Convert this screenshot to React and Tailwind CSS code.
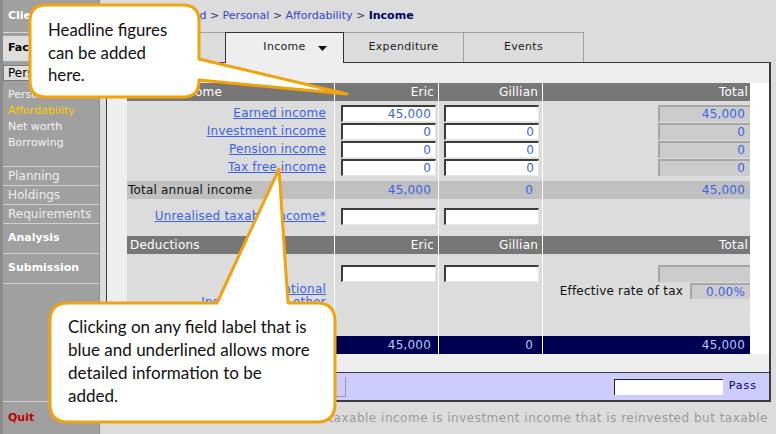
import React from "react";

const GRID = "grid grid-cols-[207px_103px_103px_207px] gap-x-px bg-white";
const CELL = "flex items-center bg-[#dcdcdc]";

function Row({ className = "", children }) {
  return <div className={`${GRID} ${className}`}>{children}</div>;
}

function Spacer({ className }) {
  return (
    <Row className={className}>
      <div className="bg-[#dcdcdc]" />
      <div className="bg-[#dcdcdc]" />
      <div className="bg-[#dcdcdc]" />
      <div className="bg-[#dcdcdc]" />
    </Row>
  );
}

function Field({ value = "", className = "" }) {
  return (
    <input
      readOnly
      value={value}
      className={`h-[17px] w-[95px] border-t-2 border-l-2 border-b border-r border-t-[#3c3c3c] border-l-[#3c3c3c] border-b-[#e6e6e6] border-r-[#e6e6e6] bg-white pr-[4px] text-right text-[#3a62e8] outline-none ${className}`}
    />
  );
}

function Sum({ value = "" }) {
  return (
    <div className="ml-auto flex h-[17px] w-[92px] items-center justify-end border-t-2 border-l-2 border-[#a6a6a6] bg-[#cccccc] pr-[5px] text-[#3a62e8]">
      {value}
    </div>
  );
}

function Link({ children }) {
  return <a className="cursor-pointer text-[#3a62e8] underline">{children}</a>;
}

const incomeRows = [
  { label: "Earned income", eric: "45,000", gillian: "", total: "45,000" },
  { label: "Investment income", eric: "0", gillian: "0", total: "0" },
  { label: "Pension income", eric: "0", gillian: "0", total: "0" },
  { label: "Tax free income", eric: "0", gillian: "0", total: "0" },
];

function Sidebar() {
  return (
    <nav className="flex h-full w-[100px] shrink-0 flex-col border-l-[3px] border-r border-l-[#8c8c8c] border-r-[#8c8c8c] bg-[#a0a0a0] text-[11px] text-white">
      <div className="flex h-[33px] items-center border-b border-[#d8d8d8] pl-[5px] font-bold">Client</div>
      <div className="h-[3px]" />
      <div className="flex h-[25px] items-center bg-[#dedede] pl-[5px] font-bold text-black">Factfind</div>
      <div className="h-[4px]" />
      <div className="flex h-[16px] items-center border border-[#7a7a7a] bg-[#dedede] pl-[4px] text-[12px] text-black">
        Personal
      </div>
      <div className="flex h-[85px] flex-col pt-[6px] pl-[5px] leading-[16px] text-[#f4f4f4]">
        <span>Personal details</span>
        <span className="text-[#ffcc00]">Affordability</span>
        <span>Net worth</span>
        <span>Borrowing</span>
      </div>
      <div className="flex h-[19px] items-center border-t border-[#d0d0d0] pl-[5px] text-[12px] text-[#eeeeee]">Planning</div>
      <div className="flex h-[19px] items-center border-t border-[#d0d0d0] pl-[5px] text-[12px] text-[#eeeeee]">Holdings</div>
      <div className="flex h-[19px] items-center border-t border-[#d0d0d0] pl-[5px] text-[12px] text-[#eeeeee]">Requirements</div>
      <div className="flex h-[30px] items-center border-t border-[#d0d0d0] pl-[5px] font-bold">Analysis</div>
      <div className="flex h-[30px] items-center border-t border-[#d0d0d0] pl-[5px] font-bold">Submission</div>
      <div className="flex-1 border-y border-[#d0d0d0]" />
      <div className="flex h-[32px] items-center justify-between pl-[5px] pr-[4px]">
        <span className="font-bold text-[#c00000]">Quit</span>
        <span className="pt-[6px] text-[9px] tracking-[1px] text-[#d8d8d8]">....</span>
      </div>
    </nav>
  );
}

function Breadcrumb() {
  return (
    <div className="flex h-[32px] items-center pl-[9px] text-[11px] text-[#333366]">
      <a className="text-[#3344cc]">Client</a>
      <span className="px-[3.5px]">&gt;</span>
      <a className="text-[#3344cc]">Factfind</a>
      <span className="px-[3.5px]">&gt;</span>
      <a className="text-[#3344cc]">Personal</a>
      <span className="px-[3.5px]">&gt;</span>
      <a className="text-[#3344cc]">Affordability</a>
      <span className="px-[3.5px]">&gt;</span>
      <span className="font-bold text-[#000060]">Income</span>
    </div>
  );
}

function Tabs() {
  return (
    <div className="relative z-10 flex h-[30px] items-end text-[11px] tracking-[0.3px] text-[#222]">
      <div className="flex h-[30px] w-[119px] items-center justify-center border-l border-t border-[#a0a0a0]">Summary</div>
      <div className="relative -mb-px flex h-[31px] w-[119px] items-center justify-center border-x border-t border-[#333] bg-[#eeeeee] pb-px">
        Income
        <svg className="absolute right-[16px] top-[13px]" width="9" height="5" viewBox="0 0 9 5">
          <path d="M0 0 H9 L4.5 5 Z" fill="#111" />
        </svg>
      </div>
      <div className="flex h-[30px] w-[120px] items-center justify-center border-r border-t border-[#a0a0a0]">Expenditure</div>
      <div className="flex h-[30px] w-[120px] items-center justify-center border-r border-t border-[#a0a0a0]">Events</div>
    </div>
  );
}

function IncomeTable() {
  return (
    <div className="text-[12px] tracking-[0.2px]">
      <Row className="h-[18px]">
        <div className="flex items-center bg-[#777777] pl-[3px] text-white">Annual income</div>
        <div className="flex items-center justify-end bg-[#777777] pr-[4px] text-white">Eric</div>
        <div className="flex items-center justify-end bg-[#777777] pr-[4px] text-white">Gillian</div>
        <div className="flex items-center justify-end bg-[#777777] pr-[2px] text-white">Total</div>
      </Row>
      <Spacer className="h-[3px]" />
      {incomeRows.map((r) => (
        <Row key={r.label} className="h-[18px]">
          <div className={`${CELL} justify-end pr-[8px]`}>
            <Link>{r.label}</Link>
          </div>
          <div className={CELL}>
            <Field value={r.eric} className="ml-[6px]" />
          </div>
          <div className={CELL}>
            <Field value={r.gillian} className="ml-[5px]" />
          </div>
          <div className={CELL}>
            <Sum value={r.total} />
          </div>
        </Row>
      ))}
      <Spacer className="h-[5px]" />
      <Row className="h-[18px]">
        <div className="flex items-center bg-[#c0c0c0] pl-[1px] text-[#111]">Total annual income</div>
        <div className="flex items-center justify-end bg-[#c0c0c0] pr-[7px] text-[#3a62e8]">45,000</div>
        <div className="flex items-center justify-end bg-[#c0c0c0] pr-[9px] text-[#3a62e8]">0</div>
        <div className="flex items-center justify-end bg-[#c0c0c0] pr-[5px] text-[#3a62e8]">45,000</div>
      </Row>
      <Spacer className="h-[8px]" />
      <Row className="h-[18px]">
        <div className={`${CELL} justify-end pr-[8px]`}>
          <Link>Unrealised taxable income*</Link>
        </div>
        <div className={CELL}>
          <Field className="ml-[6px]" />
        </div>
        <div className={CELL}>
          <Field className="ml-[5px]" />
        </div>
        <div className={CELL} />
      </Row>
      <Spacer className="h-[11px]" />
      <Row className="h-[18px]">
        <div className="flex items-center bg-[#777777] pl-[3px] text-white">Deductions</div>
        <div className="flex items-center justify-end bg-[#777777] pr-[4px] text-white">Eric</div>
        <div className="flex items-center justify-end bg-[#777777] pr-[4px] text-white">Gillian</div>
        <div className="flex items-center justify-end bg-[#777777] pr-[2px] text-white">Total</div>
      </Row>
      <Spacer className="h-[10px]" />
      <Row className="h-[18px]">
        <div className={CELL} />
        <div className={CELL}>
          <Field className="ml-[6px]" />
        </div>
        <div className={CELL}>
          <Field className="ml-[5px]" />
        </div>
        <div className={CELL}>
          <Sum />
        </div>
      </Row>
      <Row className="h-[54px]">
        <div className="flex flex-col items-end bg-[#dcdcdc] pr-[8px] pt-[1px] text-right leading-[13px]">
          <Link>Tax, National</Link>
          <Link>Insurance and other</Link>
          <Link>deductions</Link>
        </div>
        <div className="bg-[#dcdcdc]" />
        <div className="bg-[#dcdcdc]" />
        <div className="flex items-start justify-end bg-[#dcdcdc] pt-[1px]">
          <div className="flex h-[16px] items-center gap-[7px]">
            <span className="text-[#111]">Effective rate of tax</span>
            <div className="flex h-[16px] w-[60px] items-center justify-end border-t-2 border-l-2 border-[#a6a6a6] bg-[#cccccc] pr-[5px] text-[#3a62e8]">
              0.00%
            </div>
          </div>
        </div>
      </Row>
      <Row className="h-[18px]">
        <div className="flex items-center bg-[#000050] pl-[3px] text-white">Net income</div>
        <div className="flex items-center justify-end bg-[#000050] pr-[7px] text-[#b4c8ff]">45,000</div>
        <div className="flex items-center justify-end bg-[#000050] pr-[9px] text-[#b4c8ff]">0</div>
        <div className="flex items-center justify-end bg-[#000050] pr-[5px] text-[#b4c8ff]">45,000</div>
      </Row>
    </div>
  );
}

function Panel() {
  return (
    <div className="flex h-[340px] flex-col border-t border-l border-r-2 border-b-2 border-[#3a3a3a]">
      <div className="flex-1 bg-[#eeeeee] pl-[20px] pt-[20px]">
        <IncomeTable />
      </div>
      <div className="flex h-[28px] items-center border-t border-[#3a3a3a] bg-[#ccccff] pr-[12px]">
        <div className="h-[20px] w-[239px] border-b border-r border-[#9a9a9a]" />
        <div className="ml-auto h-[16px] w-[109px] border-l border-t border-[#222] bg-white" />
        <span className="ml-[6px] text-[11px] tracking-[1px] text-[#000080]">Pass</span>
      </div>
    </div>
  );
}

function Callouts() {
  return (
    <div className="pointer-events-none absolute left-0 top-0 z-30 h-[434px] w-[776px]">
      <svg className="absolute left-0 top-0" width="776" height="434" viewBox="0 0 776 434">
        <path
          d="M46 5 H183 Q199 5 199 21 V59 L347 94 L199 80 V81 Q199 97 183 97 H46 Q30 97 30 81 V21 Q30 5 46 5 Z"
          fill="#ffffff"
          stroke="#f0a30a"
          strokeWidth="3"
          strokeLinejoin="round"
        />
        <path
          d="M68 303 H217 L279 169 L288 303 H317 Q335 303 335 321 V404 Q335 422 317 422 H68 Q50 422 50 404 V321 Q50 303 68 303 Z"
          fill="#ffffff"
          stroke="#f0a30a"
          strokeWidth="3"
          strokeLinejoin="round"
        />
      </svg>
      <div className="absolute left-[48px] top-[19px] font-['Lato',sans-serif] text-[16.8px] leading-[22.5px] text-[#111]">
        <p>Headline figures</p>
        <p>can be added</p>
        <p>here.</p>
      </div>
      <div className="absolute left-[68px] top-[315px] font-['Lato',sans-serif] text-[17px] leading-[23px] text-[#111]">
        <p>Clicking on any field label that is</p>
        <p>blue and underlined allows more</p>
        <p>detailed information to be</p>
        <p>added.</p>
      </div>
    </div>
  );
}

export default function App() {
  return (
    <div className="relative flex h-[434px] w-[776px] overflow-hidden bg-[#dcdcdc] font-['DejaVu_Sans',sans-serif] text-[11px] text-[#222]">
      <Sidebar />
      <div className="flex min-w-0 flex-1 flex-col pl-[6px] pr-[5px]">
        <Breadcrumb />
        <Tabs />
        <Panel />
        <div className="flex h-[32px] items-center justify-end pr-[3px] text-[12px] tracking-[0.5px] text-[#9a9a9a]">
          * Unrealised taxable income is investment income that is reinvested but taxable
        </div>
      </div>
      <Callouts />
    </div>
  );
}
